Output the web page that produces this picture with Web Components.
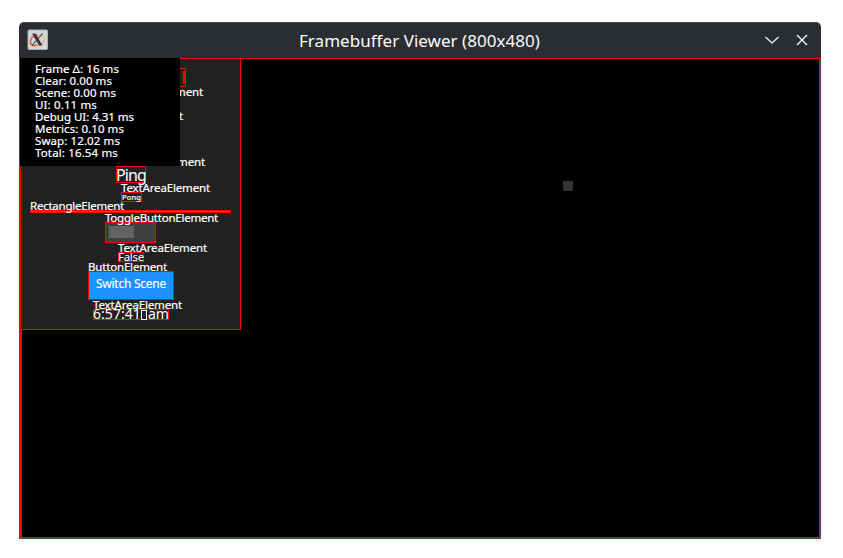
<!DOCTYPE html>
<html lang="en"><head><meta charset="utf-8"><title>Framebuffer Viewer</title>
<style>html,body{margin:0;background:#fff}body{width:843px;height:558px;overflow:hidden;font-family:"Noto Sans",sans-serif;color:#fff}</style></head>
<body><viewer-app></viewer-app>
<script>
// Text run whose advance is spread to an exact pixel width.
customElements.define('fit-text', class extends HTMLElement {
  connectedCallback(){
    const r=this.attachShadow({mode:'open'});
    r.innerHTML='<style>:host{display:block;white-space:pre}span{display:inline-block}</style><span><slot></slot></span>';
    const s=r.querySelector('span'), w=+this.getAttribute('w'), n=this.textContent.length;
    if(w) s.style.letterSpacing=((w-s.getBoundingClientRect().width)/n)+'px';
  }
});
customElements.define('title-bar', class extends HTMLElement {
  connectedCallback(){
    this.attachShadow({mode:'open'}).innerHTML=`<style>
    :host{display:grid;grid-template-columns:280px 1fr 57px;height:35px;align-items:center;background:#2a2e32;border-top:1px solid #4a4e52;border-radius:5px 5px 0 0}
    svg{display:block}.logo{margin-left:8px;margin-top:-2px}fit-text{font-size:17px;line-height:22px;color:#fcfcfc;padding-top:1px}
    .c{display:flex;gap:14px;margin-top:-2px}</style>
    <svg class="logo" width="22" height="22" viewBox="0 0 22 22"><rect x="1" y="1" width="19.500" height="19.500" rx="1" fill="#d2d6d9" stroke="#aab0b4"/>
    <path d="M11 6C6 6 2.500 10 3.500 14c1 3 4 3 7 2" fill="none" stroke="#ed5b2c" stroke-width="1.500"/><path d="M11 16c5-1 8-5 6-8-1-1-3-2-5-2" fill="none" stroke="#f0b76a" stroke-width="1.300"/>
    <path d="M5 4.500h3.500L15.500 16.500H12z" fill="#33383c"/><path d="M15.500 4.500L5 16.500" stroke="#33383c" stroke-width="1.100"/></svg>
    <fit-text w="241">Framebuffer Viewer (800x480)</fit-text>
    <div class="c"><svg width="16" height="16" viewBox="0 0 16 16"><path d="M1.500 5l6.500 6 6.500-6" fill="none" stroke="#fcfcfc" stroke-width="1.200"/></svg>
    <svg width="16" height="16" viewBox="0 0 16 16"><path d="M3 3l10 10M13 3L3 13" stroke="#fcfcfc" stroke-width="1.300"/></svg></div>`;
  }
});
// Outlined element bounds; its type name hangs above the top-left corner.
customElements.define('debug-box', class extends HTMLElement {
  connectedCallback(){
    const a=k=>this.getAttribute(k);
    this.attachShadow({mode:'open'}).innerHTML=`<style>
    :host{display:block;position:relative;box-sizing:border-box;flex:none;width:${a('w')}px;height:${a('h')}px;margin:${a('gap')}px 0 0 ${a('x')}px;border:1px solid #f00;background:${a('bg')||'transparent'}}
    .n{position:absolute;left:-1px;top:-11px;font-size:11.5px;-webkit-text-stroke:.2px #fff;line-height:12px;z-index:2}</style>
    <slot></slot>${a('name')?`<fit-text class="n" w="${a('nw')}">${a('name')}</fit-text>`:''}`;
  }
});
customElements.define('metrics-overlay', class extends HTMLElement {
  connectedCallback(){
    const rows=[['Frame Δ: 16 ms',84],['Clear: 0.00 ms',77],['Scene: 0.00 ms',81],['UI: 0.11 ms',62],['Debug UI: 4.31 ms',99],['Metrics: 0.10 ms',89],['Swap: 12.02 ms',85],['Total: 16.54 ms',83]];
    this.attachShadow({mode:'open'}).innerHTML=`<style>:host{position:absolute;left:0;top:0;z-index:5;width:160px;height:108px;box-sizing:border-box;padding:5px 0 0 15px;background:#000;font-size:11.5px;-webkit-text-stroke:.2px #fff;line-height:12px}fit-text{height:12px}</style>`+
      rows.map(r=>`<fit-text w="${r[1]}">${r[0]}</fit-text>`).join('');
  }
});
customElements.define('scene-panel', class extends HTMLElement {
  connectedCallback(){
    this.attachShadow({mode:'open'}).innerHTML=`<style>
    :host{display:flex;flex-direction:column;box-sizing:border-box;width:221px;height:272px;border:1px solid #f00;background:#212121}
    fit-text{height:100%;margin-left:-1px}
    .ping{font-size:16px;line-height:20px;margin-top:-2px}.pong{font-size:7.5px;-webkit-text-stroke:.2px #fff;line-height:10px;margin-top:-1px;margin-left:0}
    .false{font-size:11.5px;line-height:12px;margin-top:-2px}.btn{font-size:12px;-webkit-text-stroke:.15px #fff;line-height:24px;margin-left:7px}
    .time{font-size:14px;line-height:16px;margin-top:-4px}.knob{width:25px;height:12px;margin:3px;background:#636363}
    .line{height:1px;background:#b05050}.mark{width:2px;height:12px;margin:2px 0 0 auto;background:#f00}
    i{display:inline-block;box-sizing:border-box;width:6px;height:10px;margin:0 1px 0 0;border:1px solid #fff;vertical-align:-1px;letter-spacing:0;overflow:hidden}</style>
    <debug-box x="89" gap="9" w="76" h="19"><div class="mark"></div></debug-box>
    <debug-box x="93" gap="9" w="34" h="10" name="TextAreaElement" nw="89"></debug-box>
    <debug-box x="83" gap="14" w="54" h="24" name="ButtonElement" nw="79"></debug-box>
    <debug-box x="95" gap="22" w="30" h="17" name="TextAreaElement" nw="89"><fit-text class="ping" w="30">Ping</fit-text></debug-box>
    <debug-box x="100" gap="9" w="21" h="10" name="TextAreaElement" nw="89"><fit-text class="pong" w="19">Pong</fit-text></debug-box>
    <debug-box x="9" gap="8" w="201" h="3" name="RectangleElement" nw="94"><div class="line"></div></debug-box>
    <debug-box x="84" gap="9" w="51" h="21" bg="#404040" name="ToggleButtonElement" nw="113"><div class="knob"></div></debug-box>
    <debug-box x="97" gap="9" w="26" h="10" name="TextAreaElement" nw="89"><fit-text class="false" w="26">False</fit-text></debug-box>
    <debug-box x="67" gap="9" w="86" h="29" bg="#1e90ff" name="ButtonElement" nw="79"><fit-text class="btn" w="70">Switch Scene</fit-text></debug-box>
    <debug-box x="72" gap="9" w="76" h="11" name="TextAreaElement" nw="89"><fit-text class="time" w="76">6:57:41<i></i>am</fit-text></debug-box>`;
  }
});
customElements.define('frame-buffer', class extends HTMLElement {
  connectedCallback(){
    this.attachShadow({mode:'open'}).innerHTML=`<style>:host{display:block;position:relative;box-sizing:border-box;width:800px;height:480px;background:#000;border:1px solid #f00;border-left-width:2px}
    scene-panel{margin:-1px 0 0 -2px}metrics-overlay{left:-2px;top:-1px}.cube{position:absolute;left:541px;top:122px;width:10px;height:10px;background:#333}</style>
    <scene-panel></scene-panel><metrics-overlay></metrics-overlay><div class="cube"></div>`;
  }
});
customElements.define('viewer-app', class extends HTMLElement {
  connectedCallback(){
    this.attachShadow({mode:'open'}).innerHTML=`<style>:host{display:block;width:802px;padding:22px 0 0 19px}
    frame-buffer{margin:0 1px}.body{background:#4b4e51;padding-bottom:1px}</style><title-bar></title-bar><div class="body"><frame-buffer></frame-buffer></div>`;
  }
});
</script></body></html>
